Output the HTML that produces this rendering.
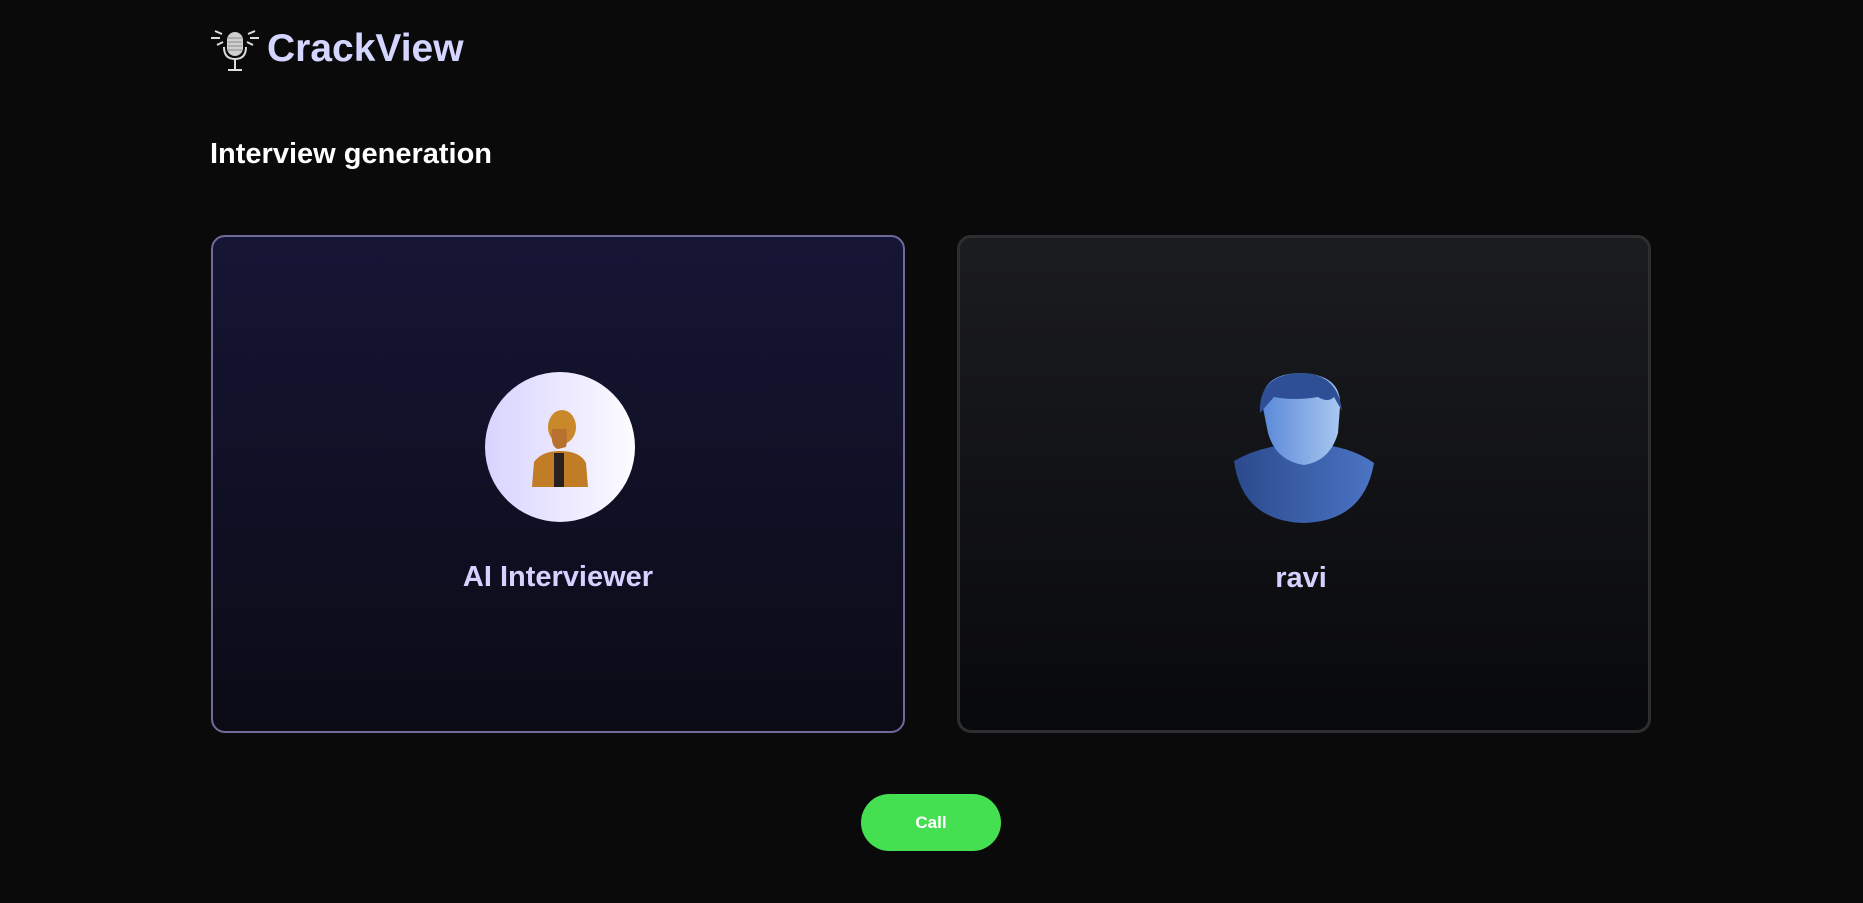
<!DOCTYPE html>
<html><head><style>
*{margin:0;padding:0;box-sizing:border-box}
body{width:1863px;height:903px;background:#0a0a0a;font-family:"Liberation Sans",sans-serif;position:relative;overflow:hidden}
.abs{position:absolute}
.card{position:absolute;top:235px;width:694px;height:498px;border-radius:14px}
.c1{left:211px;background:linear-gradient(180deg,#161535 0%,#0b0b16 100%);border:2px solid #6f6a9a}
.c2{left:957px;background:linear-gradient(180deg,#1b1c20 0%,#08090c 100%);border:3px solid #2e2e30}
.lbl{position:absolute;top:324px;width:100%;text-align:center;font-size:29px;color:#d4d2ff;font-weight:bold}
</style></head><body>
<svg class="abs" style="left:210px;top:29px" width="50" height="44" viewBox="0 0 50 44">
<g stroke="#ddd" stroke-width="2" fill="none">
<line x1="1" y1="9" x2="10" y2="9"/><line x1="40" y1="9" x2="49" y2="9"/>
<line x1="5" y1="2" x2="12" y2="5"/><line x1="45" y1="2" x2="38" y2="5"/>
<line x1="7" y1="16" x2="13" y2="13"/><line x1="43" y1="16" x2="37" y2="13"/>
<path d="M14 18 Q14 30 25 30 Q36 30 36 18"/><line x1="25" y1="30" x2="25" y2="40"/><line x1="18" y1="41" x2="32" y2="41"/>
</g>
<rect x="17" y="3" width="16" height="24" rx="8" fill="#cfcfcf"/>
<g stroke="#888" stroke-width="1"><line x1="18" y1="9" x2="32" y2="9"/><line x1="18" y1="13" x2="32" y2="13"/><line x1="18" y1="17" x2="32" y2="17"/><line x1="18" y1="21" x2="32" y2="21"/></g>
</svg>
<div class="abs" style="left:267px;top:27px;font-size:39px;color:#d4d6ff;font-weight:bold">CrackView</div>
<div class="abs" style="left:210px;top:138px;font-size:29px;color:#fff;font-weight:bold">Interview generation</div>
<div class="card c1">
 <div class="abs" style="left:272px;top:135px;width:150px;height:150px;border-radius:50%;background:linear-gradient(90deg,#d8d3ff,#fdfcff)"></div>
 <svg class="abs" style="left:309px;top:170px" width="76" height="80" viewBox="0 0 76 80">
  <ellipse cx="40" cy="20" rx="14" ry="17" fill="#c9882a"/>
  <path d="M30 22 Q28 40 36 42 L44 40 Q46 30 44 22Z" fill="#b8702f"/>
  <path d="M10 80 L12 55 Q20 44 38 44 Q58 44 64 56 L66 80Z" fill="#c07d25"/>
  <rect x="32" y="46" width="10" height="34" fill="#2a2020"/>
 </svg>
 <div class="lbl">AI Interviewer</div>
</div>
<div class="card c2">
 <svg class="abs" style="left:274px;top:134px" width="140" height="152" viewBox="0 0 140 150">
  <defs><linearGradient id="g" x1="0" x2="1"><stop offset="0" stop-color="#2b4a8c"/><stop offset="1" stop-color="#4b74c4"/></linearGradient>
  <linearGradient id="f" x1="0" x2="1"><stop offset="0" stop-color="#5a88d8"/><stop offset="1" stop-color="#a9c8f0"/></linearGradient></defs>
  <path d="M0 88 Q20 76 48 72 L92 72 Q120 76 140 90 Q130 148 70 150 Q8 148 0 88Z" fill="url(#g)"/>
  <path d="M28 30 Q28 0 68 0 Q108 2 106 34 L104 60 Q96 88 70 92 Q42 88 34 60Z" fill="url(#f)"/>
  <path d="M26 40 Q24 2 66 0 Q104 0 108 38 L100 24 Q94 30 84 24 Q60 28 40 24 Z" fill="#2e4f96"/>
 </svg>
 <div class="lbl" style="left:-3px">ravi</div>
</div>
<div class="abs" style="left:861px;top:794px;width:140px;height:57px;border-radius:29px;background:#44e052;color:#fff;font-weight:bold;font-size:17px;text-align:center;line-height:57px">Call</div>
</body></html>
